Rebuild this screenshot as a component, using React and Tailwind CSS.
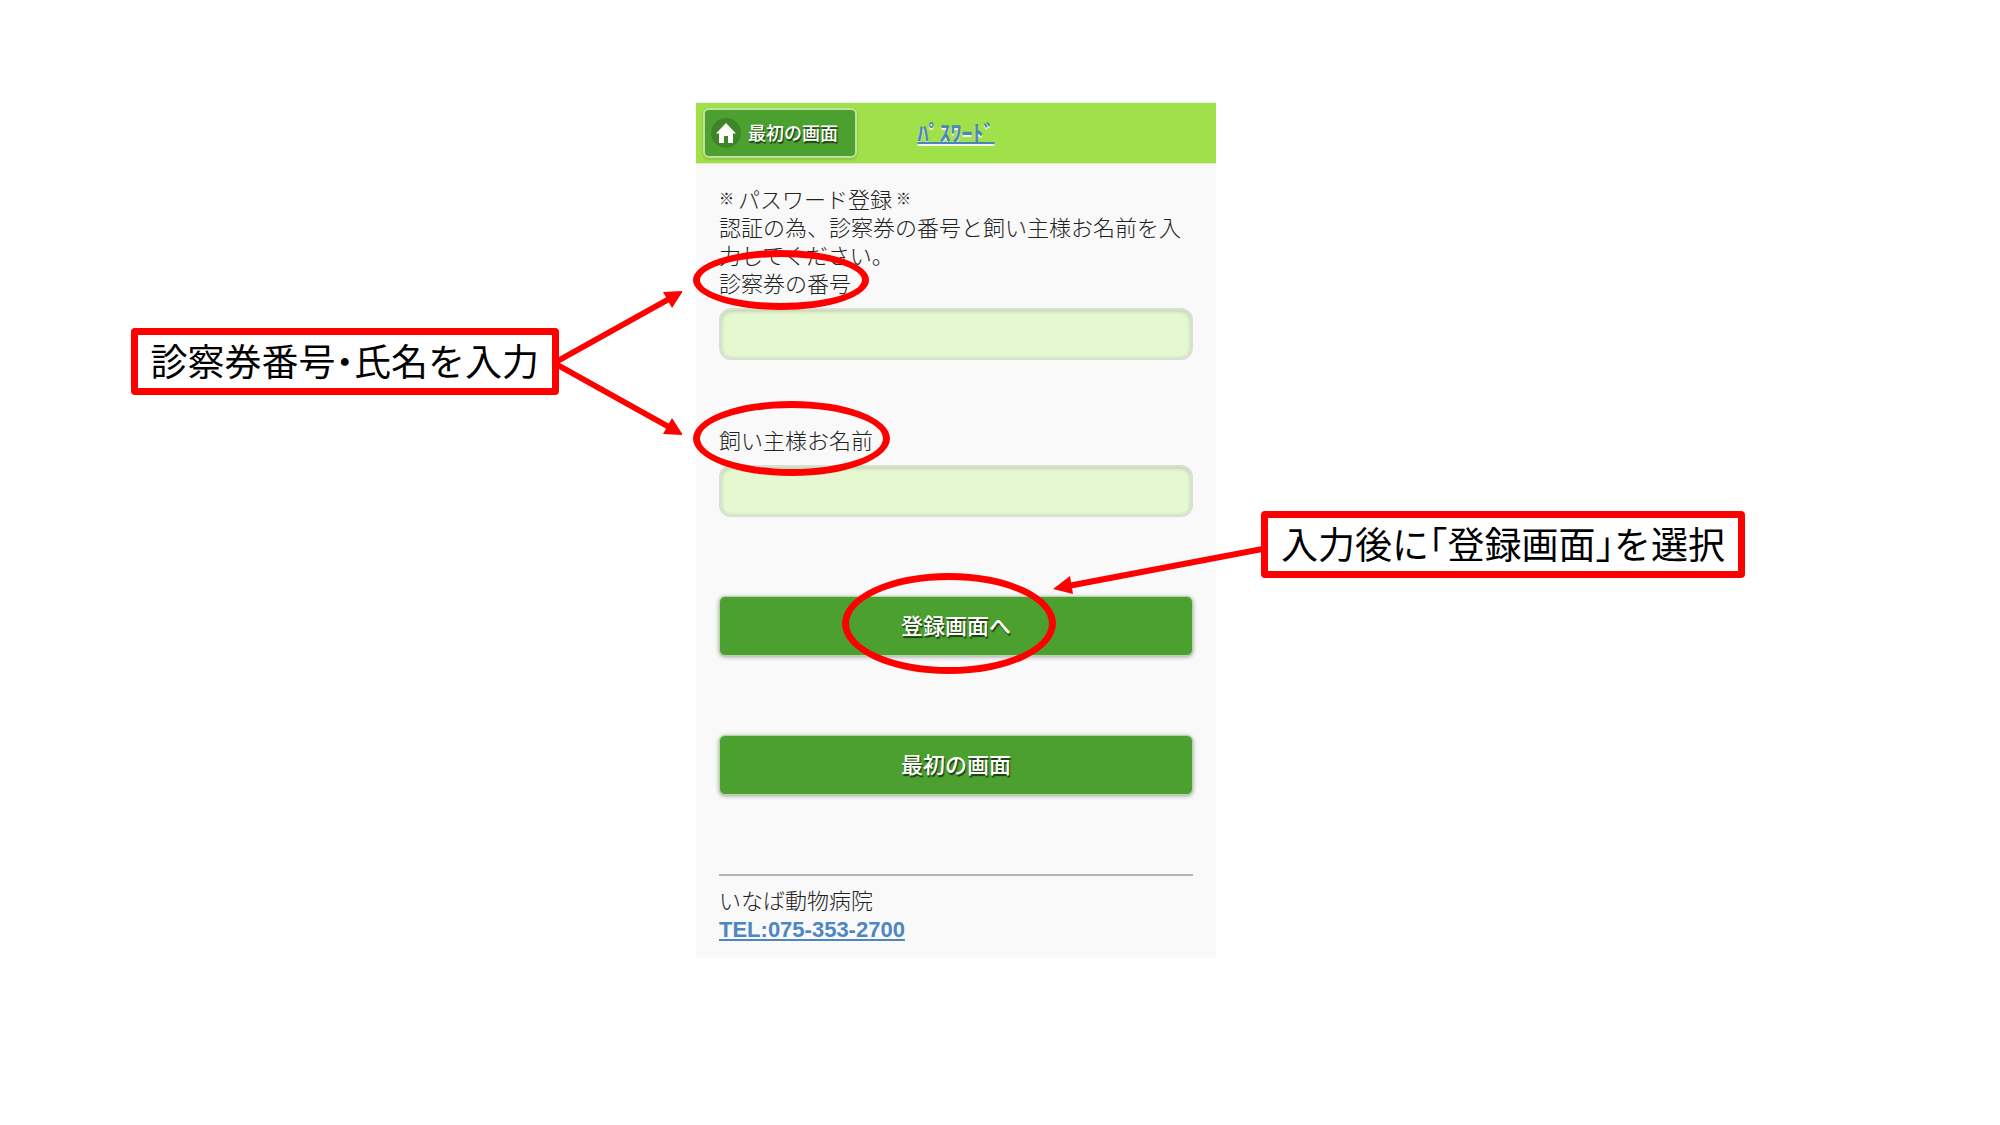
import React, { useState } from 'react';

function Callout({ children, arrows }) {
  return (
    <div className="relative whitespace-nowrap rounded-sm border-7 border-[#ff0000] bg-white px-[13px] pt-[7px] pb-[9px] text-[37px] leading-[37px] text-black [font-feature-settings:'halt']">
      {children}
      {arrows}
    </div>
  );
}

// Red ring drawn over the part of the form that the callout talks about
function Ring({ className }) {
  return (
    <span
      aria-hidden="true"
      className={`pointer-events-none absolute rounded-[50%] border-7 border-[#ff0000] ${className}`}
    />
  );
}

function InputArrows() {
  return (
    <svg
      className="absolute -top-[45px] left-full h-[146px] w-[130px] fill-[#ff0000] stroke-[#ff0000]"
      viewBox="0 0 130 146"
      aria-hidden="true"
    >
      <path d="M2 73 L117 9 M2 73 L117 137" strokeWidth="6" fill="none" />
      <path d="M131 1 L120 18 L111 2 Z M131 145 L120 128 L111 144 Z" stroke="none" />
    </svg>
  );
}

function SubmitArrow() {
  return (
    <svg
      className="absolute top-[24px] right-full h-[56px] w-[215px] fill-[#ff0000] stroke-[#ff0000]"
      viewBox="0 0 215 56"
      aria-hidden="true"
    >
      <path d="M215 6 L15 44" strokeWidth="6" fill="none" />
      <path d="M0 47 L17 34 L20 52 Z" stroke="none" />
    </svg>
  );
}

function Field({ id, label, value, onChange, ring }) {
  return (
    <div className="flex flex-col items-start gap-3">
      <label htmlFor={id} className="relative">
        {label}
        <Ring className={ring} />
      </label>
      <input
        id={id}
        type="text"
        value={value}
        onChange={(e) => onChange(e.target.value)}
        className="h-[52px] w-full rounded-xl border-2 border-[#d9dfd4] bg-[#e5f8d0] px-3 shadow-[inset_0_1px_4px_rgba(0,0,0,0.2)] outline-none"
      />
    </div>
  );
}

function GreenButton({ children }) {
  return (
    <button
      type="button"
      className="h-[60px] w-full rounded-md border border-[#b5d6a9] bg-[#4ca02f] pb-1 font-medium text-white shadow-[0_1px_4px_rgba(0,0,0,0.35)] [text-shadow:1px_2px_1px_#1c3d10]"
    >
      {children}
    </button>
  );
}

export default function App() {
  const [cardNumber, setCardNumber] = useState('');
  const [ownerName, setOwnerName] = useState('');

  return (
    <main
      lang="ja"
      className="grid min-h-screen grid-cols-[696fr_520fr_784fr] items-start bg-white pt-[101px] pb-20 font-['Noto_Sans_CJK_JP',sans-serif]"
    >
      <div className="relative z-10 flex justify-end pt-[227px] pr-[137px]">
        <Callout arrows={<InputArrows />}>診察券番号・氏名を入力</Callout>
      </div>

      <section className="border-t-2 border-[#f5f5f5] bg-[#f9f9f9] text-[22px] leading-[28px] text-[#222222]">
        <header className="grid h-[61px] grid-cols-[1fr_auto_1fr] items-center border-b border-[#d8efbb] bg-[#a0e048] px-[7px]">
          <button
            type="button"
            className="flex h-[50px] w-[154px] items-center gap-[7px] rounded-md border-2 border-[#bfe0a0] bg-[#4ca02f] pl-1.5 text-[18px] font-medium text-white shadow-[0_1px_3px_rgba(0,0,0,0.2)] [text-shadow:1px_2px_1px_#1c3d10]"
          >
            <span className="flex size-[30px] items-center justify-center rounded-full bg-[#3d8527]">
              <svg viewBox="0 0 20 20" className="size-5 fill-white" aria-hidden="true">
                <path d="M10 0 L20 10.500 H17 V20 H12 V13 H8 V20 H3 V10.500 H0 Z" />
              </svg>
            </span>
            <span className="pb-0.5">最初の画面</span>
          </button>
          <h1 className="pb-1">
            <a
              href="#password"
              className="font-bold text-[#4a86b8] underline decoration-2 [text-shadow:0_2px_1px_#f3f3f3]"
            >
              ﾊﾟｽﾜｰﾄﾞ
            </a>
          </h1>
        </header>

        <form className="flex flex-col gap-[79px] px-[23px] pt-5 pb-3.5 font-light">
          <div>
            <p className="flex items-center gap-1">
              <span className="text-[15px] font-bold">※</span>
              パスワード登録
              <span className="text-[15px] font-bold">※</span>
            </p>
            <p>認証の為、診察券の番号と飼い主様お名前を入力してください。</p>
            <div className="flex flex-col gap-[65px]">
              <Field
                id="card-number"
                label="診察券の番号"
                value={cardNumber}
                onChange={setCardNumber}
                ring="-top-[18px] -left-[26px] h-[60px] w-[176px]"
              />
              <Field
                id="owner-name"
                label="飼い主様お名前"
                value={ownerName}
                onChange={setOwnerName}
                ring="-top-[24px] -left-[26px] h-[75px] w-[197px]"
              />
            </div>
          </div>

          <div className="relative">
            <GreenButton>登録画面へ</GreenButton>
            <Ring className="-top-[23px] left-[26%] h-[101px] w-[214px]" />
          </div>
          <GreenButton>最初の画面</GreenButton>

          <footer className="flex flex-col items-start gap-[3px] border-t-2 border-[#b3b3b3] pt-[9px]">
            <p>いなば動物病院</p>
            <a
              href="tel:075-353-2700"
              className="font-['Liberation_Sans',sans-serif] font-bold text-[#4e86c2] underline"
            >
              TEL:075-353-2700
            </a>
          </footer>
        </form>
      </section>

      <div className="relative z-10 flex justify-start pt-[410px] pl-[45px]">
        <Callout arrows={<SubmitArrow />}>入力後に「登録画面」を選択</Callout>
      </div>
    </main>
  );
}
